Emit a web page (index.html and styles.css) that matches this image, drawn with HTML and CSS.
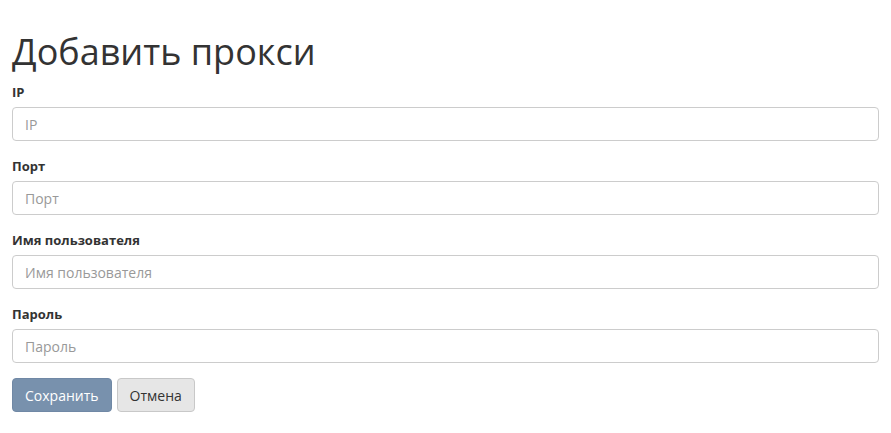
FILE: index.html
```html
<!DOCTYPE html>
<html lang="ru">
<head>
    <meta charset="UTF-8">
    <meta name="viewport" content="width=device-width, initial-scale=1.0">
    <title>Добавить прокси</title>
    <link rel="stylesheet" href="styles.css">
</head>
<body>
    <div class="container">
        <h1>Добавить прокси</h1>
        <form action="#" method="POST">
            <div class="form-group">
                <label for="ip">IP</label>
                <input type="text" id="ip" class="form-control" placeholder="IP">
            </div>
            <div class="form-group">
                <label for="port">Порт</label>
                <input type="text" id="port" class="form-control" placeholder="Порт">
            </div>
            <div class="form-group">
                <label for="username">Имя пользователя</label>
                <input type="text" id="username" class="form-control" placeholder="Имя пользователя">
            </div>
            <div class="form-group">
                <label for="password">Пароль</label>
                <input type="password" id="password" class="form-control" placeholder="Пароль">
            </div>
            <div class="button-group">
                <button type="submit" class="btn btn-primary">Сохранить</button>
                <button type="button" class="btn btn-default">Отмена</button>
            </div>
        </form>
    </div>
</body>
</html>
```
FILE: styles.css
```css
body {
    font-family: "Open Sans", Arial, sans-serif;
    font-size: 14px;
    color: #333;
    margin: 0;
    background: #fff;
}
.container {
    padding: 0 12px;
}
h1 {
    font-size: 36px;
    font-weight: 400;
    line-height: 40px;
    margin: 32px 0 10px;
}
.form-group {
    margin-bottom: 15px;
}
.form-group label {
    display: block;
    font-size: 13px;
    font-weight: 700;
    line-height: 20px;
    margin-bottom: 5px;
}
.form-control {
    display: block;
    box-sizing: border-box;
    width: 100%;
    height: 34px;
    padding: 6px 12px;
    font-family: inherit;
    font-size: 14px;
    color: #555;
    border: 1px solid #ccc;
    border-radius: 4px;
    background: #fff;
}
.form-control::placeholder {
    color: #999;
}
.button-group {
    display: flex;
    gap: 5px;
}
.btn {
    height: 34px;
    padding: 6px 12px;
    font-family: inherit;
    font-size: 14px;
    border: 1px solid transparent;
    border-radius: 4px;
}
.btn-primary {
    background-color: #7891ad;
    border-color: #7088a5;
    color: #fff;
}
.btn-default {
    background-color: #e6e6e6;
    border-color: #c8c8c8;
    color: #333;
}
```
